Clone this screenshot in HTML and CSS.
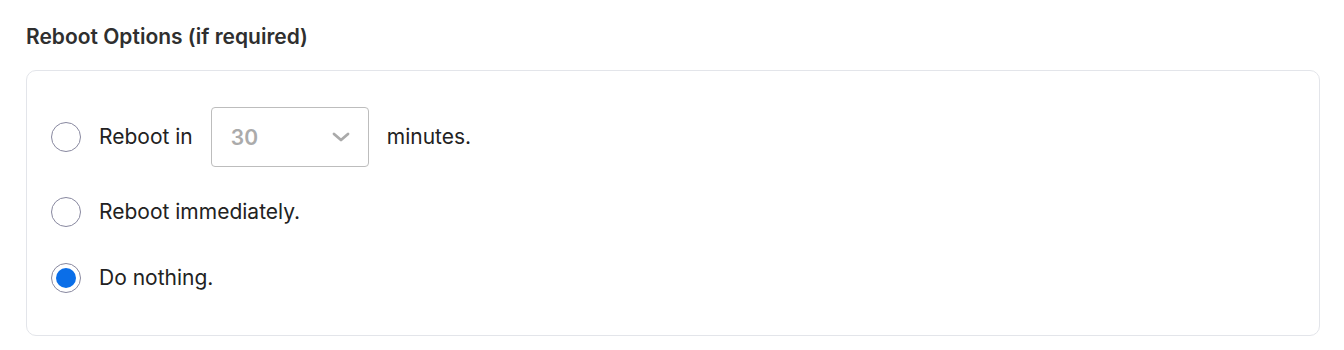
FILE: index.html
```html
<!DOCTYPE html>
<html lang="en">
<head>
    <meta charset="UTF-8">
    <title>Reboot Options</title>
    <link rel="stylesheet" href="styles.css">
</head>
<body>
    <div class="section">
        <h2 class="section-title">Reboot Options (if required)</h2>
        <div class="card">
            <label class="option option-delay">
                <input type="radio" name="reboot" value="delay">
                <span class="radio"></span>
                <span class="option-text">Reboot in</span>
                <span class="select">
                    <span class="select-value">30</span>
                    <svg class="chevron" width="18" height="10" viewBox="0 0 18 10">
                        <path d="M2 2 L9 8 L16 2" fill="none" stroke="#aaa" stroke-width="2.8" stroke-linecap="round" stroke-linejoin="round"/>
                    </svg>
                </span>
                <span class="option-text">minutes.</span>
            </label>
            <label class="option option-now">
                <input type="radio" name="reboot" value="now">
                <span class="radio"></span>
                <span class="option-text">Reboot immediately.</span>
            </label>
            <label class="option">
                <input type="radio" name="reboot" value="none" checked>
                <span class="radio"></span>
                <span class="option-text">Do nothing.</span>
            </label>
        </div>
    </div>
</body>
</html>
```

FILE: styles.css
```css
body {
    margin: 0;
    font-family: Inter, "Noto Sans", sans-serif;
    background: #fff;
    color: #222;
}

.section {
    padding: 23px 24px 15px 26px;
}

.section-title {
    margin: 0 0 19px;
    font-size: 21px;
    line-height: 28px;
    font-weight: 600;
    color: #2f2f2f;
}

.card {
    border: 1px solid #e3e5ea;
    border-radius: 10px;
    padding: 36px 24px 42px;
}

.option {
    display: flex;
    align-items: center;
    gap: 18px;
    font-size: 21px;
    cursor: pointer;
}

.option-delay {
    margin-bottom: 30px;
}

.option-now {
    margin-bottom: 36px;
}

.option input {
    display: none;
}

.radio {
    width: 28px;
    height: 28px;
    border: 1px solid #88889f;
    border-radius: 50%;
    position: relative;
    flex-shrink: 0;
}

.option input:checked + .radio::after {
    content: "";
    position: absolute;
    top: 4px;
    left: 4px;
    width: 20px;
    height: 20px;
    border-radius: 50%;
    background: #0a6ee8;
}

.option-text {
    line-height: 30px;
}

.select {
    display: flex;
    align-items: center;
    justify-content: space-between;
    width: 158px;
    height: 60px;
    border: 1px solid #bdbdbd;
    border-radius: 4px;
    padding: 0 18px 0 19px;
    box-sizing: border-box;
}

.select-value {
    font-weight: 600;
    color: #ababab;
}
```
